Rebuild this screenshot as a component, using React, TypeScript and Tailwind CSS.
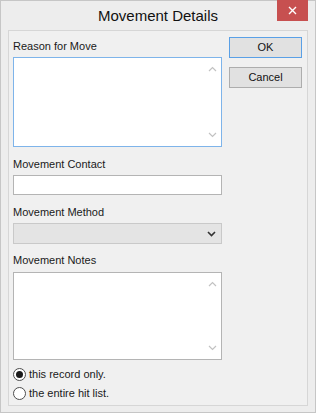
import React from "react";

const font = { fontFamily: '"Liberation Sans", Arial, sans-serif' };

function ScrollArrows() {
  return (
    <div className="flex w-[17px] flex-col items-center justify-between py-[8px]">
      <svg width="9" height="6" viewBox="0 0 9 6">
        <path d="M1 5 L4.5 1.5 L8 5" fill="none" stroke="#c2c2c2" strokeWidth="1.2" />
      </svg>
      <svg width="9" height="6" viewBox="0 0 9 6">
        <path d="M1 1 L4.5 4.5 L8 1" fill="none" stroke="#c2c2c2" strokeWidth="1.2" />
      </svg>
    </div>
  );
}

function Label({ children, className = "" }: { children: React.ReactNode; className?: string }) {
  return <div className={"h-[14px] text-[11px] leading-[14px] text-[#1a1a1a] " + className}>{children}</div>;
}

function Radio({ checked, label, className = "" }: { checked?: boolean; label: string; className?: string }) {
  return (
    <div className={"flex h-[14px] items-center " + className}>
      <div className="flex h-[13px] w-[13px] items-center justify-center rounded-full border border-[#4d4d4d] bg-white">
        {checked && <div className="h-[7px] w-[7px] rounded-full bg-[#1a1a1a]" />}
      </div>
      <span className="ml-[3px] text-[11px] leading-[14px] text-[#1a1a1a]">{label}</span>
    </div>
  );
}

export default function App() {
  return (
    <div style={font} className="flex h-[413px] w-[316px] flex-col border border-[#c6c6c6] bg-[#ededed]">
      <div className="relative flex h-[29px] items-center justify-center">
        <span className="text-[15px] leading-[18px] text-[#111]">Movement Details</span>
        <div className="absolute right-[7px] top-[-1px] flex h-[21px] w-[31px] items-center justify-center bg-[#c75050]">
          <svg width="9" height="9" viewBox="0 0 9 9">
            <path d="M1 1 L8 8 M8 1 L1 8" stroke="#fff" strokeWidth="1.4" />
          </svg>
        </div>
      </div>
      <div className="ml-[7px] flex h-[376px] w-[300px] border border-[#d6d6d6] bg-[#f0f0f0]">
        <div className="ml-[4px] flex w-[209px] flex-col pt-[8px]">
          <Label>Reason for Move</Label>
          <div className="mt-[4px] flex h-[90px] justify-end border border-[#7eb4ea] bg-white">
            <ScrollArrows />
          </div>
          <Label className="mt-[10px]">Movement Contact</Label>
          <div className="mt-[4px] h-[20px] border border-[#b4b4b4] bg-white" />
          <Label className="mt-[10px]">Movement Method</Label>
          <div className="mt-[4px] flex h-[21px] items-center justify-end border border-[#c9c9c9] bg-[#e4e4e4] pr-[5px]">
            <svg width="9" height="6" viewBox="0 0 9 6">
              <path d="M1 1 L4.5 4.5 L8 1" fill="none" stroke="#333" strokeWidth="1.6" />
            </svg>
          </div>
          <Label className="mt-[9px]">Movement Notes</Label>
          <div className="mt-[5px] flex h-[88px] justify-end border border-[#b4b4b4] bg-white">
            <ScrollArrows />
          </div>
          <Radio checked label="this record only." className="mt-[7px]" />
          <Radio label="the entire hit list." className="mt-[5px]" />
        </div>
        <div className="ml-[7px] flex flex-col pt-[6px]">
          <div className="flex h-[21px] w-[73px] items-center justify-center border border-[#5aa0e6] bg-[#e1e1e1] text-[11px] text-[#111]">
            OK
          </div>
          <div className="mt-[9px] flex h-[21px] w-[73px] items-center justify-center border border-[#adadad] bg-[#e1e1e1] text-[11px] text-[#111]">
            Cancel
          </div>
        </div>
      </div>
    </div>
  );
}
